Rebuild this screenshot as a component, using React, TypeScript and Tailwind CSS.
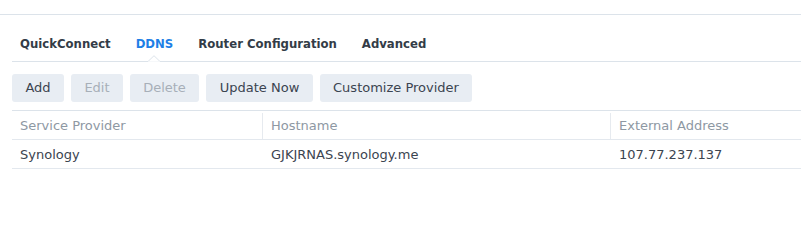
import React from 'react'

// ── Data ──────────────────────────────────────────────────────────────────────
const TABS = ['QuickConnect', 'DDNS', 'Router Configuration', 'Advanced']
const ACTIVE_TAB = 'DDNS'

const BUTTONS: { label: string; disabled?: boolean; w: string }[] = [
  { label: 'Add', w: 'w-[52px]' },
  { label: 'Edit', disabled: true, w: 'w-[52px]' },
  { label: 'Delete', disabled: true, w: 'w-[69px]' },
  { label: 'Update Now', w: 'w-[107px]' },
  { label: 'Customize Provider', w: 'w-[152px]' },
]

const ROWS = [
  { provider: 'Synology', hostname: 'GJKJRNAS.synology.me', address: '107.77.237.137' },
]

// ── Tab strip with the little caret under the active tab ──────────────────────
function TabBar() {
  return (
    <div className="ml-3 flex h-[47px] items-center gap-[25px] border-b border-[#dce3ea] pl-2 pt-[14px]">
      {TABS.map((tab) => {
        const active = tab === ACTIVE_TAB
        return (
          <div
            key={tab}
            className={
              'relative h-full flex items-center text-[11.7px] font-bold ' +
              (active ? 'text-[#1e7fe6]' : 'text-[#333c47]')
            }
          >
            {tab}
            {active && (
              <svg
                className="absolute bottom-[-1px] left-1/2 -translate-x-1/2"
                width="12"
                height="7"
                viewBox="0 0 12 7"
              >
                <path d="M0 6.5 L6 0.7 L12 6.5" fill="#ffffff" stroke="#dce3ea" strokeWidth="1" />
                <rect x="0" y="6.5" width="12" height="1" fill="#ffffff" />
              </svg>
            )}
          </div>
        )
      })}
    </div>
  )
}

// ── Toolbar ───────────────────────────────────────────────────────────────────
function Toolbar() {
  return (
    <div className="ml-3 mt-3 flex gap-[7px]">
      {BUTTONS.map((b) => (
        <div
          key={b.label}
          className={
            'flex h-[28px] items-center justify-center rounded-[3px] bg-[#e8edf3] text-[13px] ' +
            b.w +
            (b.disabled ? ' text-[#a7afb8]' : ' text-[#3b4450]')
          }
        >
          {b.label}
        </div>
      ))}
    </div>
  )
}

// ── Grid ──────────────────────────────────────────────────────────────────────
function DdnsTable() {
  const cols = 'grid grid-cols-[251px_348px_1fr]'
  return (
    <div className="ml-3 mt-2 border-t border-[#dce3ea] text-[13px]">
      <div className={cols + ' h-[29px] items-center border-b border-[#e3e8ee] pt-[2px] text-[#8e98a3]'}>
        <div className="flex h-full items-center border-r border-[#e6eaef] pl-2">Service Provider</div>
        <div className="flex h-full items-center border-r border-[#e6eaef] pl-2">Hostname</div>
        <div className="flex h-full items-center pl-2">External Address</div>
      </div>
      {ROWS.map((r) => (
        <div key={r.hostname} className={cols + ' h-[29px] items-center border-b border-[#e3e8ee] pt-[2px] text-[#3b4450]'}>
          <div className="pl-2">{r.provider}</div>
          <div className="pl-2">{r.hostname}</div>
          <div className="pl-2">{r.address}</div>
        </div>
      ))}
    </div>
  )
}

export default function App() {
  return (
    <div className="h-[251px] w-[801px] overflow-hidden bg-white font-['DejaVu_Sans',Verdana,sans-serif]">
      <div className="h-[15px] border-b border-[#dce3ea]" />
      <TabBar />
      <Toolbar />
      <DdnsTable />
    </div>
  )
}
